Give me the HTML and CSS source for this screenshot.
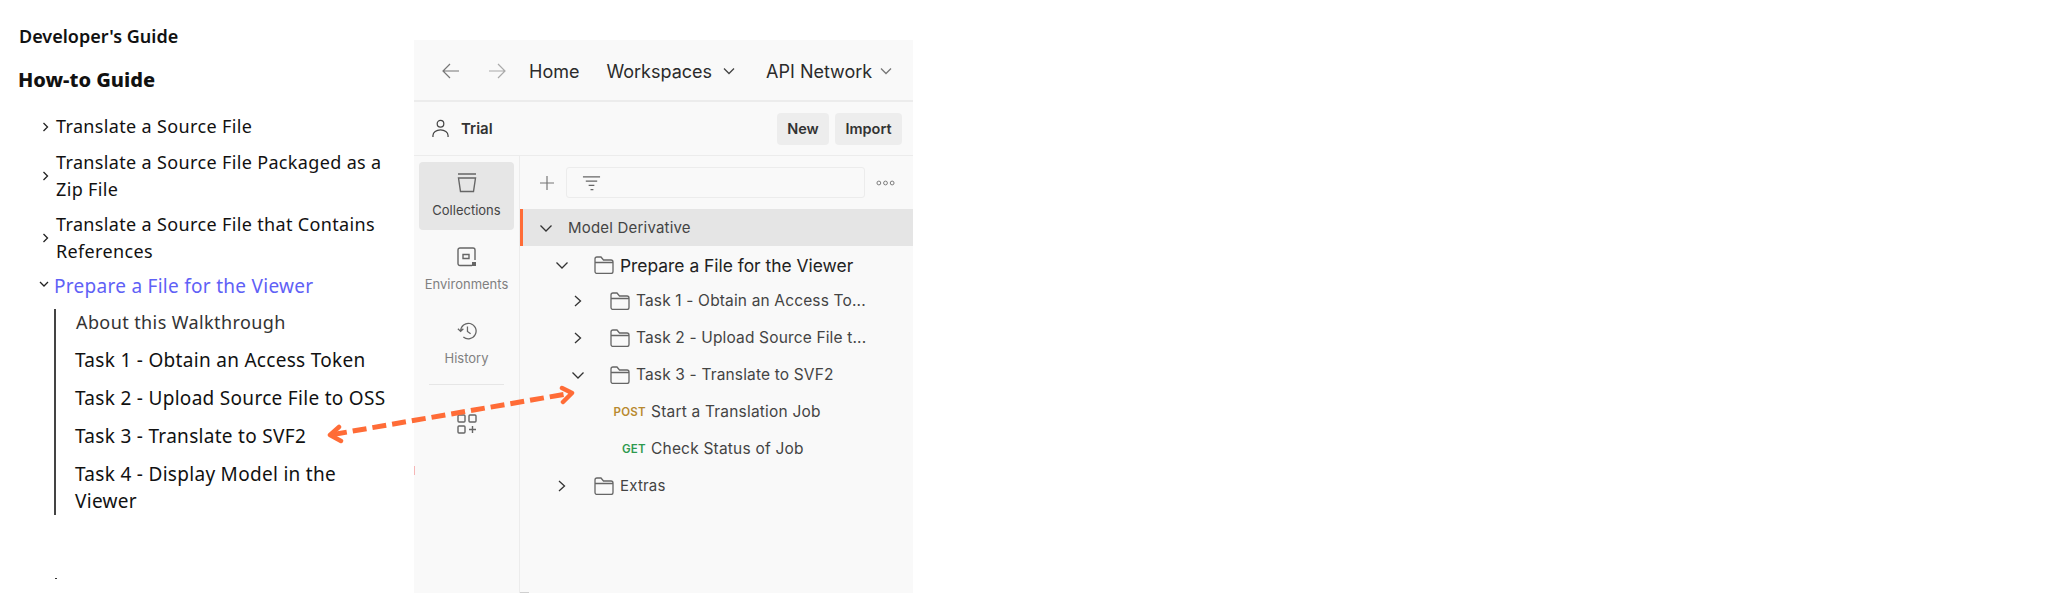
FILE: index.html
```html
<!DOCTYPE html>
<html lang="en">
<head>
  <meta charset="UTF-8" />
  <title>How-to Guide</title>
  <link rel="stylesheet" href="styles.css">
</head>
<body>
<div class="page">
  <nav class="guide">
    <div class="guide-title">Developer's Guide</div>
    <h2 class="guide-heading">How-to Guide</h2>
    <ul class="guide-list">
      <li class="guide-item item-single">
        <svg class="caret" viewBox="0 0 8 10"><path d="M2 1l4 4-4 4"/></svg>
        <span>Translate a Source File</span>
      </li>
      <li class="guide-item item-double">
        <svg class="caret" viewBox="0 0 8 10"><path d="M2 1l4 4-4 4"/></svg>
        <span>Translate a Source File Packaged as a Zip File</span>
      </li>
      <li class="guide-item item-double">
        <svg class="caret" viewBox="0 0 8 10"><path d="M2 1l4 4-4 4"/></svg>
        <span>Translate a Source File that Contains References</span>
      </li>
      <li class="guide-item item-open">
        <svg class="caret caret-open" viewBox="0 0 10 8"><path d="M1 2l4 4 4-4"/></svg>
        <span>Prepare a File for the Viewer</span>
      </li>
    </ul>
    <ul class="sub-list">
      <li class="sub-first">About this Walkthrough</li>
      <li>Task 1 - Obtain an Access Token</li>
      <li>Task 2 - Upload Source File to OSS</li>
      <li>Task 3 - Translate to SVF2</li>
      <li>Task 4 - Display Model in the Viewer</li>
    </ul>
    <div class="speck"></div>
  </nav>

  <section class="app">
    <header class="topbar">
      <svg class="nav-arrow" viewBox="0 0 18 16"><path d="M17 8H1M8 1L1 8l7 7"/></svg>
      <svg class="nav-arrow nav-arrow-off" viewBox="0 0 18 16"><path d="M1 8h16M10 1l7 7-7 7"/></svg>
      <span class="nav-link nav-home">Home</span>
      <span class="nav-link nav-work">Workspaces</span>
      <svg class="nav-chev" viewBox="0 0 12 8"><path d="M1 1.500l5 5 5-5"/></svg>
      <span class="nav-link nav-api">API Network</span>
      <svg class="nav-chev nav-chev-light" viewBox="0 0 12 8"><path d="M1 1.500l5 5 5-5"/></svg>
    </header>

    <div class="workspace-bar">
      <svg class="user-icon" viewBox="0 0 18 20"><circle cx="9" cy="5" r="3.500"/><path d="M1 19v-1.500a8 6 0 0 1 16 0V19"/></svg>
      <span class="workspace-name">Trial</span>
      <button class="btn btn-new">New</button>
      <button class="btn btn-import">Import</button>
    </div>

    <div class="app-body">
      <aside class="side">
        <div class="side-item side-active">
          <svg class="side-icon" viewBox="0 0 20 20"><path d="M1 1h18M1.500 5h17l-2 13.500h-13z"/></svg>
          <span>Collections</span>
        </div>
        <div class="side-item">
          <svg class="side-icon" viewBox="0 0 20 20"><path d="M15 18.500H3a2 2 0 0 1-2-2V3a2 2 0 0 1 2-2h13a2 2 0 0 1 2 2v10M6 7.500h6v4H6z"/><rect class="fill" x="15" y="15" width="4" height="4"/></svg>
          <span>Environments</span>
        </div>
        <div class="side-item">
          <svg class="side-icon" viewBox="0 0 22 20"><path d="M4 10a8.500 8.500 0 1 1 3 6.500M1 7.500l3 3 3-3M11.500 5v5.500l3.500 2.500"/></svg>
          <span>History</span>
        </div>
        <div class="side-rule"></div>
        <svg class="side-icon side-apps" viewBox="0 0 20 20"><rect x="1" y="1" width="7" height="7" rx="1"/><rect x="12" y="1" width="7" height="7" rx="1"/><rect x="1" y="12" width="7" height="7" rx="1"/><path d="M15.500 12v7M12 15.500h7"/></svg>
      </aside>

      <main class="tree">
        <div class="toolbar">
          <svg class="plus" viewBox="0 0 16 16"><path d="M8 1v14M1 8h14"/></svg>
          <div class="search">
            <svg class="filter" viewBox="0 0 20 16"><path d="M1 1.500h18M4 6h12M7 10.500h6M9 15h3"/></svg>
          </div>
          <svg class="dots" viewBox="0 0 20 6"><circle cx="3" cy="3" r="2"/><circle cx="10" cy="3" r="2"/><circle cx="17" cy="3" r="2"/></svg>
        </div>

        <div class="row row-selected">
          <svg class="chev" viewBox="0 0 12 12"><path d="M.5 3.500L6 9l5.500-5.500"/></svg>
          <span>Model Derivative</span>
        </div>
        <div class="row row-folder row-big">
          <svg class="chev" viewBox="0 0 12 12"><path d="M.5 3.500L6 9l5.500-5.500"/></svg>
          <svg class="folder" viewBox="0 0 20 18"><path d="M1 15.500V3a2 2 0 0 1 2-2h4l2.500 3H17a2 2 0 0 1 2 2v9.500a2 2 0 0 1-2 2H3a2 2 0 0 1-2-2zM1 6.500h18"/></svg>
          <span>Prepare a File for the Viewer</span>
        </div>
        <div class="row row-task">
          <svg class="chev" viewBox="0 0 12 12"><path d="M3 1l5.500 5L3 11"/></svg>
          <svg class="folder" viewBox="0 0 20 18"><path d="M1 15.500V3a2 2 0 0 1 2-2h4l2.500 3H17a2 2 0 0 1 2 2v9.500a2 2 0 0 1-2 2H3a2 2 0 0 1-2-2zM1 6.500h18"/></svg>
          <span>Task 1 - Obtain an Access To...</span>
        </div>
        <div class="row row-task">
          <svg class="chev" viewBox="0 0 12 12"><path d="M3 1l5.500 5L3 11"/></svg>
          <svg class="folder" viewBox="0 0 20 18"><path d="M1 15.500V3a2 2 0 0 1 2-2h4l2.500 3H17a2 2 0 0 1 2 2v9.500a2 2 0 0 1-2 2H3a2 2 0 0 1-2-2zM1 6.500h18"/></svg>
          <span>Task 2 - Upload Source File t...</span>
        </div>
        <div class="row row-task">
          <svg class="chev" viewBox="0 0 12 12"><path d="M.5 3.500L6 9l5.500-5.500"/></svg>
          <svg class="folder" viewBox="0 0 20 18"><path d="M1 15.500V3a2 2 0 0 1 2-2h4l2.500 3H17a2 2 0 0 1 2 2v9.500a2 2 0 0 1-2 2H3a2 2 0 0 1-2-2zM1 6.500h18"/></svg>
          <span>Task 3 - Translate to SVF2</span>
        </div>
        <div class="row row-request">
          <span class="method method-post">POST</span>
          <span>Start a Translation Job</span>
        </div>
        <div class="row row-request">
          <span class="method method-get">GET</span>
          <span>Check Status of Job</span>
        </div>
        <div class="row row-folder">
          <svg class="chev" viewBox="0 0 12 12"><path d="M3 1l5.500 5L3 11"/></svg>
          <svg class="folder" viewBox="0 0 20 18"><path d="M1 15.500V3a2 2 0 0 1 2-2h4l2.500 3H17a2 2 0 0 1 2 2v9.500a2 2 0 0 1-2 2H3a2 2 0 0 1-2-2zM1 6.500h18"/></svg>
          <span>Extras</span>
        </div>
      </main>
    </div>
  </section>

  <svg class="callout" viewBox="0 0 2048 593">
    <path class="callout-dash" d="M333 434.500L569 393.500"/>
    <path class="callout-head" d="M339 427l-9 8 11 6M562 388l10 5-9 9"/>
  </svg>
</div>
</body>
</html>
```

FILE: styles.css
```css
* {
    box-sizing: border-box;
}

body {
    margin: 0;
    background-color: white;
    overflow: hidden;
}

svg {
    fill: none;
    stroke: currentColor;
    flex: none;
}

ul {
    list-style: none;
    margin: 0;
    padding: 0;
}

.page {
    position: relative;
    display: flex;
    height: 593px;
}

/* left docs nav */
.guide {
    position: relative;
    width: 414px;
    flex: none;
    padding: 25px 0 0 19px;
    font-family: "Noto Sans", sans-serif;
    color: #111;
}

.guide-title {
    font-size: 18px;
    line-height: 22px;
    font-weight: 600;
}

.guide-heading {
    margin: 21px 0 0 -1px;
    font-size: 20px;
    line-height: 24px;
    font-weight: 800;
}

.guide-list {
    margin-top: 21px;
    margin-left: 21px;
    width: 350px;
    font-size: 18px;
    line-height: 27px;
    letter-spacing: 0.35px;
}

.guide-item {
    display: flex;
    align-items: center;
    gap: 6px;
    margin-bottom: 9px;
}

.item-double {
    margin-bottom: 8px;
}

.item-open {
    margin-bottom: 0;
    margin-left: -1px;
    font-size: 19px;
    letter-spacing: 0.28px;
    color: #5f61f6;
    gap: 5px;
}

.caret {
    width: 9px;
    height: 10px;
    margin-left: 1px;
    stroke: #222;
    stroke-width: 1.300;
}

.caret-open {
    width: 10px;
    height: 8px;
    margin-top: -6px;
    margin-left: 0;
}

.sub-list {
    margin: 9px 0 0 35px;
    padding: 0 0 0 19px;
    width: 336px;
    border-left: 2px solid #444;
    font-size: 19px;
    line-height: 27px;
    letter-spacing: 0.3px;
}

.sub-list li {
    margin-top: 11px;
}

.sub-list .sub-first {
    margin-top: 0;
    padding-left: 1px;
    font-size: 18px;
    letter-spacing: 0.4px;
    color: #333;
}

.speck {
    position: absolute;
    left: 55px;
    top: 578px;
    width: 2px;
    height: 1px;
    background-color: #333;
}

/* postman panel */
.app {
    position: relative;
    width: 499px;
    margin-top: 40px;
    background-color: #f9f9f9;
    font-family: Inter, sans-serif;
    color: #333;
}

.app::before {
    content: "";
    position: absolute;
    left: 0;
    top: 426px;
    width: 1px;
    height: 9px;
    background-color: #f6b6b6;
}

.app::after {
    content: "";
    position: absolute;
    left: 106px;
    bottom: 0;
    width: 9px;
    height: 1px;
    background-color: #cfcfcf;
}

.topbar {
    display: flex;
    align-items: center;
    height: 62px;
    padding: 2px 0 0 28px;
    border-bottom: 2px solid #ececec;
    font-size: 18px;
    color: #2b2b2b;
}

.nav-arrow {
    width: 18px;
    height: 16px;
    margin-right: 28px;
    stroke: #777;
    stroke-width: 1.200;
}

.nav-arrow-off {
    margin-right: 23px;
    stroke: #aaa;
}

.nav-home {
    margin-right: 27px;
}

.nav-chev {
    width: 12px;
    height: 8px;
    margin-left: 11px;
    margin-right: 31px;
    stroke: #444;
    stroke-width: 1.300;
}

.nav-chev-light {
    margin-left: 8px;
    margin-right: 0;
    stroke: #777;
}

.workspace-bar {
    display: flex;
    align-items: center;
    height: 54px;
    padding: 0 11px 0 18px;
    border-bottom: 1px solid #ececec;
}

.user-icon {
    width: 17px;
    height: 19px;
    stroke: #444;
    stroke-width: 1.300;
}

.workspace-name {
    margin-left: 12px;
    margin-right: auto;
    font-size: 15px;
    font-weight: 600;
}

.btn {
    height: 32px;
    padding: 0;
    margin-left: 6px;
    border: 0;
    border-radius: 4px;
    background-color: #ededed;
    font-family: Inter, sans-serif;
    font-size: 14.500px;
    font-weight: 600;
    color: #333;
}

.btn-new {
    width: 52px;
}

.btn-import {
    width: 67px;
}

.app-body {
    display: flex;
    height: 437px;
}

.side {
    width: 106px;
    flex: none;
    padding: 6px 5px 0;
    border-right: 1px solid #ececec;
}

.side-item {
    display: flex;
    flex-direction: column;
    align-items: center;
    height: 68px;
    margin-bottom: 6px;
    padding-top: 11px;
    border-radius: 4px;
    font-size: 13px;
    line-height: 16px;
    color: #808080;
}

.side-active {
    background-color: #e6e6e6;
    color: #444;
}

.side-icon {
    width: 20px;
    height: 20px;
    margin-bottom: 9px;
    stroke: #666;
    stroke-width: 1.400;
}

.side-icon .fill {
    fill: #666;
    stroke: none;
}

.side-rule {
    height: 1px;
    margin: 5px 10px 29px;
    background-color: #e6e6e6;
}

.side-apps {
    display: block;
    margin: 0 auto;
}

.tree {
    flex: 1;
    min-width: 0;
    font-size: 15px;
    color: #444;
}

.toolbar {
    display: flex;
    align-items: center;
    height: 53px;
    padding-left: 19px;
}

.plus {
    width: 16px;
    height: 16px;
    stroke: #777;
    stroke-width: 1.200;
}

.search {
    display: flex;
    align-items: center;
    width: 299px;
    height: 31px;
    margin-left: 11px;
    padding-left: 15px;
    border: 1px solid #ececec;
    border-radius: 3px;
}

.filter {
    width: 19px;
    height: 16px;
    stroke: #666;
    stroke-width: 1.200;
}

.dots {
    width: 19px;
    height: 6px;
    margin-left: 11px;
    stroke: #777;
    stroke-width: 1;
}

.row {
    display: flex;
    align-items: center;
    height: 37px;
    white-space: nowrap;
    letter-spacing: 0.2px;
}

.chev {
    width: 12px;
    height: 12px;
    stroke: #333;
    stroke-width: 1.300;
}

.folder {
    width: 20px;
    height: 18px;
    stroke: #666;
    stroke-width: 1.300;
}

.row-selected {
    padding-left: 17px;
    border-left: 3px solid #ff6c37;
    background-color: #e5e5e5;
}

.row-selected .chev {
    margin-right: 16px;
}

.row-folder {
    padding-left: 36px;
}

.row-big {
    height: 34px;
    margin-top: 2px;
    font-size: 17.400px;
    letter-spacing: 0;
    color: #222;
}

.row-folder .folder {
    margin-left: 26px;
    margin-right: 6px;
}

.row-task {
    padding-left: 52px;
    font-size: 15.500px;
    letter-spacing: 0.15px;
}

.row-task .folder {
    margin-left: 26px;
    margin-right: 6px;
}

.row-request {
    padding-left: 0;
    font-size: 15.500px;
}

.method {
    width: 126px;
    margin-right: 5px;
    text-align: right;
    font-size: 11.500px;
    font-weight: 600;
    letter-spacing: 0.3px;
}

.method-post {
    color: #b8892f;
}

.method-get {
    color: #2f9a4e;
}

/* arrow over both panes */
.callout {
    position: absolute;
    left: 0;
    top: 0;
    width: 2048px;
    height: 593px;
    stroke: #ff6c37;
    stroke-linejoin: round;
    stroke-linecap: round;
    pointer-events: none;
}

.callout-dash {
    stroke-width: 5;
    stroke-linecap: butt;
    stroke-dasharray: 14 6;
}

.callout-head {
    stroke-width: 4.500;
}
```
